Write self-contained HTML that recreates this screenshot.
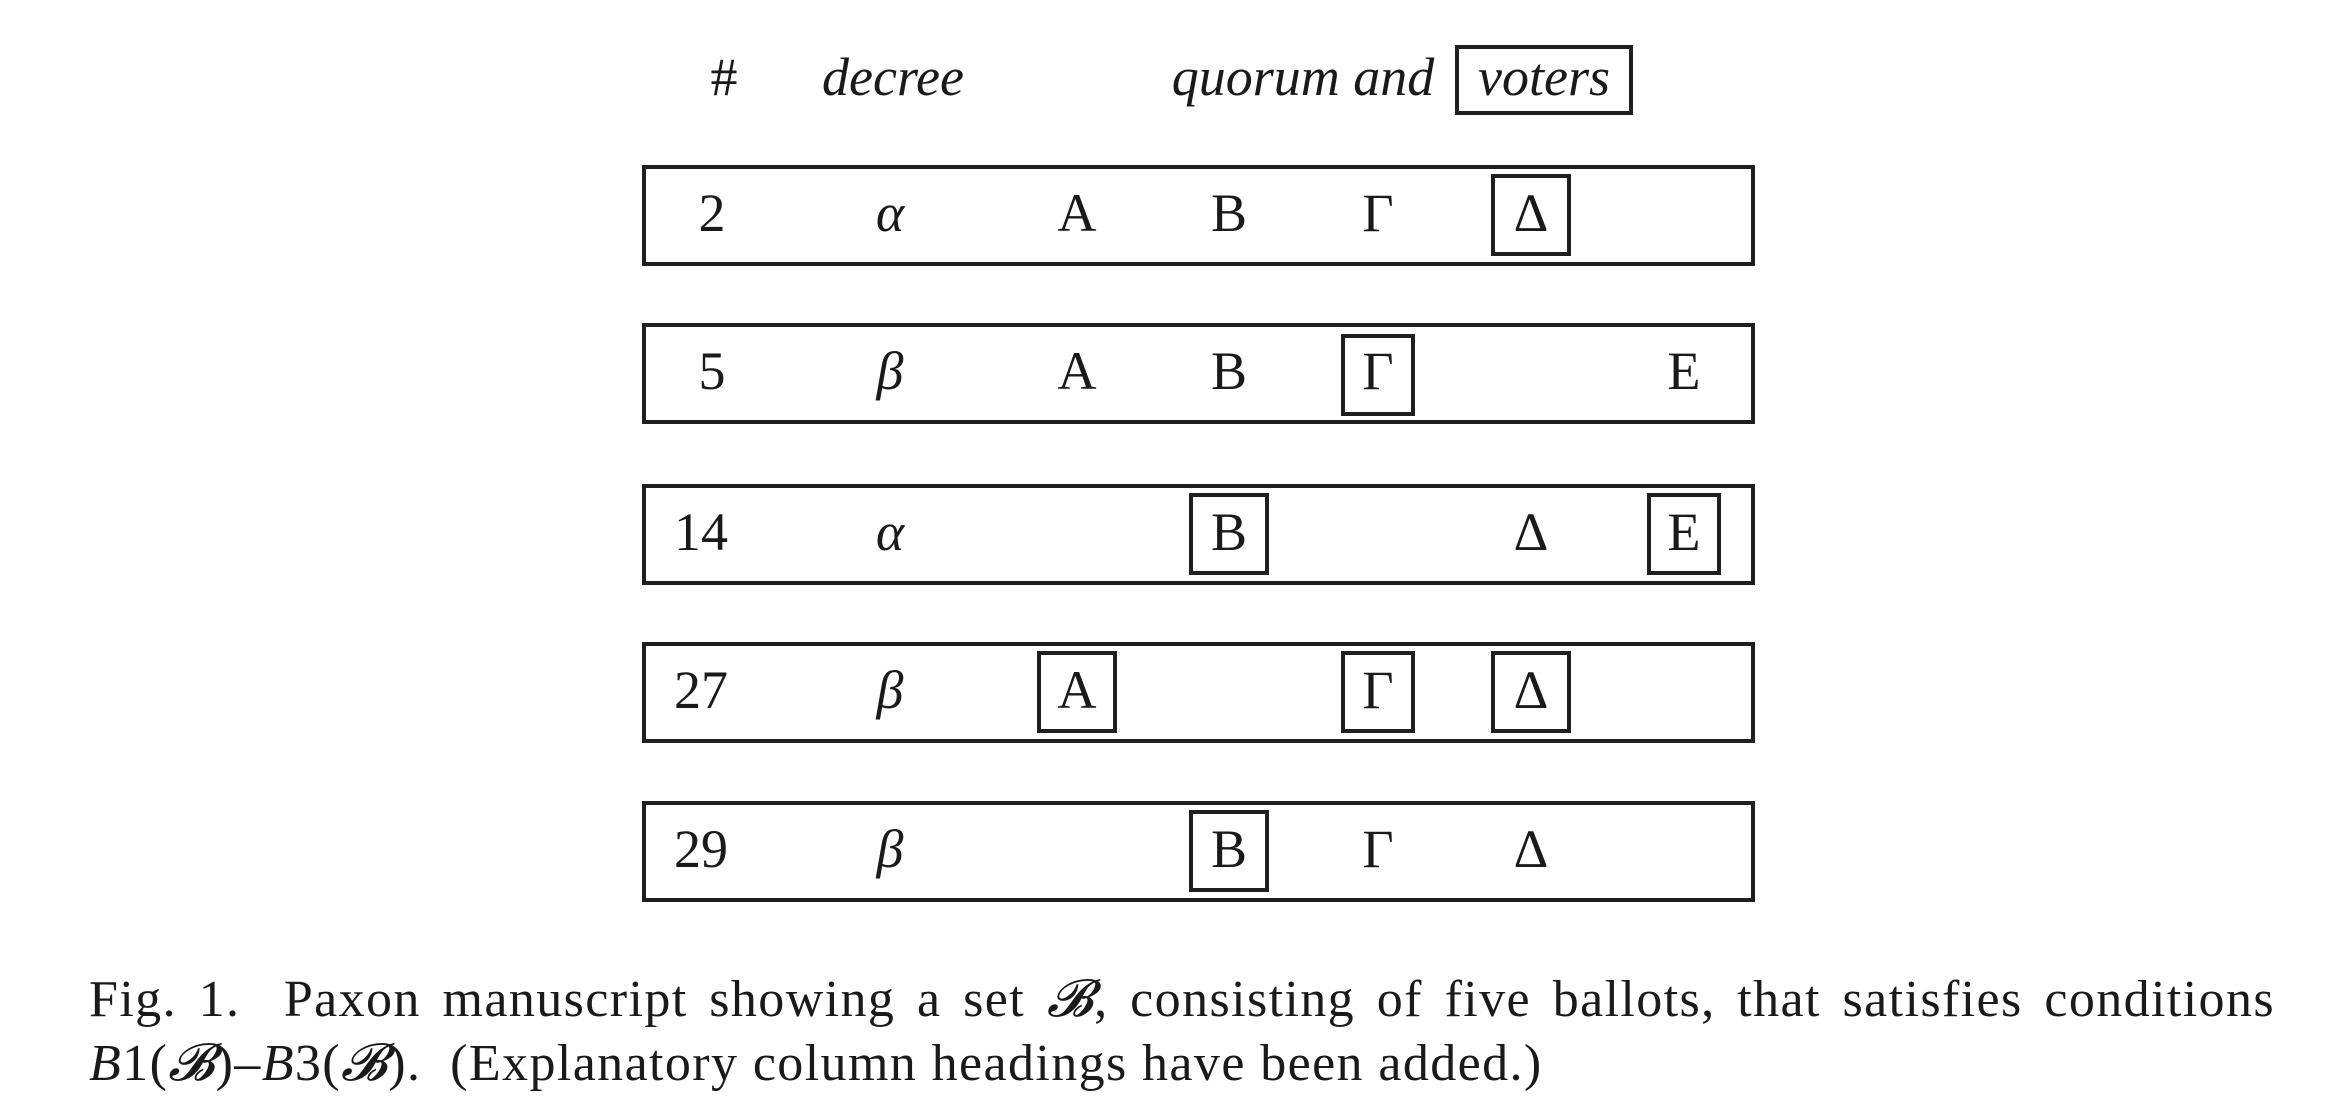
<!DOCTYPE html>
<html><head><meta charset="utf-8"><style>
html,body{margin:0;padding:0;background:#fff;}
body{width:2326px;height:1108px;position:relative;overflow:hidden;font-family:"Liberation Serif","DejaVu Serif",serif;color:#1a1a1a;}
.r{position:absolute;left:642px;width:1105px;height:93px;border:4px solid #1f1f1f;}
.t{position:absolute;height:0;line-height:0;font-size:54px;white-space:nowrap;transform:translateX(-50%);}
.i{font-style:italic;}
.b{position:absolute;width:72px;height:74px;border:4px solid #1f1f1f;transform:translateX(-50%);}
.cap{position:absolute;left:89px;width:2186px;font-size:52px;line-height:64px;letter-spacing:1.4px;}
.cap .l1{text-align:justify;text-align-last:justify;height:64px;}
</style></head><body>

<div class="t" style="left:724px;top:77px;">#</div>
<div class="t i" style="left:893px;top:77px;">decree</div>
<div class="t i" style="left:1303px;top:77px;">quorum and</div>
<div style="position:absolute;left:1455px;top:45px;width:170px;height:62px;border:4px solid #1f1f1f;"></div>
<div class="t i" style="left:1544px;top:77px;">voters</div>

<div class="r" style="top:165px"></div>
<div class="r" style="top:323px"></div>
<div class="r" style="top:484px"></div>
<div class="r" style="top:642px"></div>
<div class="r" style="top:801px"></div>

<div class="b" style="left:1531px;top:174px;"></div>
<div class="b" style="left:1378px;top:334px;width:66px;"></div>
<div class="b" style="left:1229px;top:493px;"></div>
<div class="b" style="left:1684px;top:493px;width:66px;"></div>
<div class="b" style="left:1077px;top:651px;"></div>
<div class="b" style="left:1378px;top:651px;width:66px;"></div>
<div class="b" style="left:1531px;top:651px;"></div>
<div class="b" style="left:1229px;top:810px;"></div>

<div class="t" style="left:712px;top:213px;">2</div>
<div class="t i" style="left:890px;top:213px;">α</div>
<div class="t" style="left:1077px;top:213px;">A</div>
<div class="t" style="left:1229px;top:213px;">B</div>
<div class="t" style="left:1378px;top:213px;">Γ</div>
<div class="t" style="left:1531px;top:213px;">Δ</div>

<div class="t" style="left:712px;top:371px;">5</div>
<div class="t i" style="left:890px;top:371px;">β</div>
<div class="t" style="left:1077px;top:371px;">A</div>
<div class="t" style="left:1229px;top:371px;">B</div>
<div class="t" style="left:1378px;top:371px;">Γ</div>
<div class="t" style="left:1684px;top:371px;">E</div>

<div class="t" style="left:701px;top:532px;">14</div>
<div class="t i" style="left:890px;top:532px;">α</div>
<div class="t" style="left:1229px;top:532px;">B</div>
<div class="t" style="left:1531px;top:532px;">Δ</div>
<div class="t" style="left:1684px;top:532px;">E</div>

<div class="t" style="left:701px;top:690px;">27</div>
<div class="t i" style="left:890px;top:690px;">β</div>
<div class="t" style="left:1077px;top:690px;">A</div>
<div class="t" style="left:1378px;top:690px;">Γ</div>
<div class="t" style="left:1531px;top:690px;">Δ</div>

<div class="t" style="left:701px;top:849px;">29</div>
<div class="t i" style="left:890px;top:849px;">β</div>
<div class="t" style="left:1229px;top:849px;">B</div>
<div class="t" style="left:1378px;top:849px;">Γ</div>
<div class="t" style="left:1531px;top:849px;">Δ</div>

<div class="cap" style="top:968px;">
<div class="l1">Fig. 1. &nbsp;Paxon manuscript showing a set <i>𝓑</i>, consisting of five ballots, that satisfies conditions</div>
<div><i>B</i>1(<i>𝓑</i>)–<i>B</i>3(<i>𝓑</i>). &nbsp;(Explanatory column headings have been added.)</div>
</div>
</body></html>
